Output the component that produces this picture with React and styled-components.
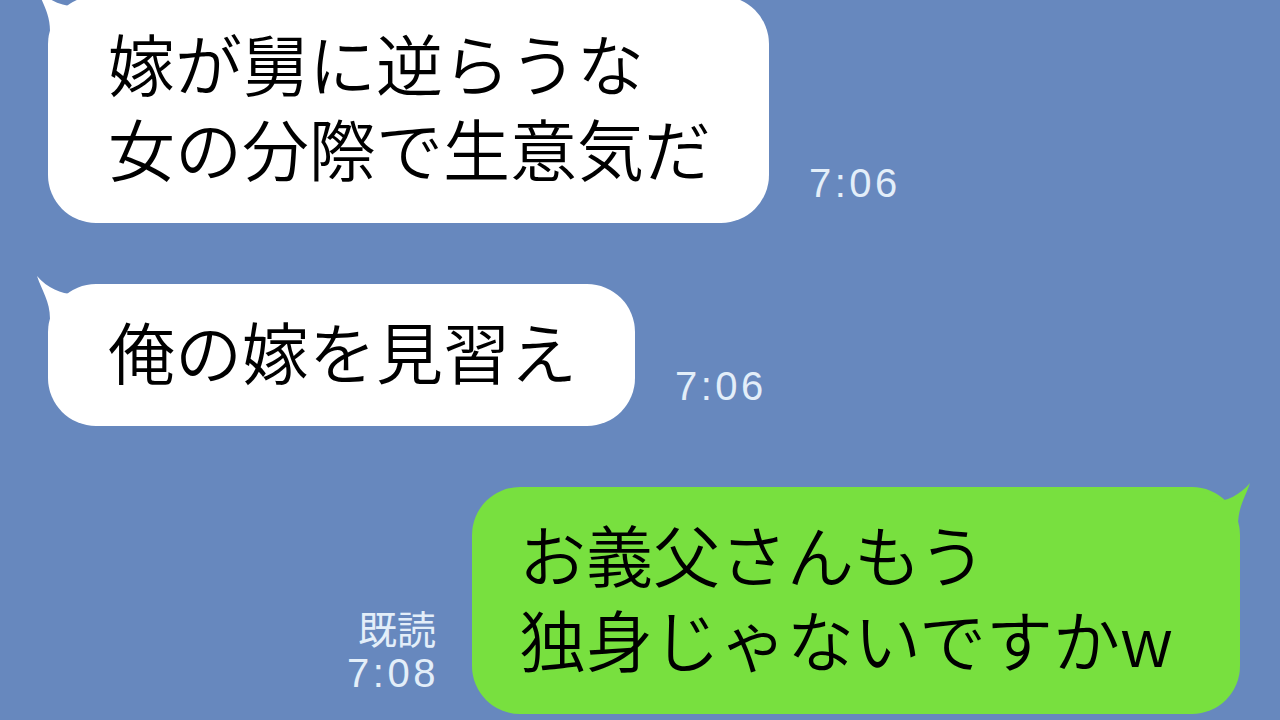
import React from "react";
import styled, { createGlobalStyle } from "styled-components";

const Global = createGlobalStyle`
  html, body { margin: 0; padding: 0; }
  body {
    width: 1280px;
    height: 720px;
    overflow: hidden;
    background: #6788be;
    font-family: "Noto Sans CJK JP", "Noto Sans", sans-serif;
  }
`;

const Screen = styled.div`
  width: 1280px;
  height: 720px;
  background: #6788be;
  overflow: hidden;
`;

const Chat = styled.div`
  display: flex;
  flex-direction: column;
  gap: 61px;
  margin-top: -4px;
  padding: 0 40px 0 48px;
`;

const Row = styled.div`
  display: flex;
  align-items: flex-end;
  justify-content: ${(p) => (p.$mine ? "flex-end" : "flex-start")};
  gap: ${(p) => (p.$mine ? "35px" : "40px")};
`;

const Bubble = styled.div`
  position: relative;
  background: ${(p) => (p.$mine ? "#78e03f" : "#ffffff")};
  border-radius: 48px;
  padding: ${(p) => (p.$mine ? "23px 67px 34px 47px" : "23px 58px 34px 60px")};
  color: #000;
  font-family: "Noto Sans CJK JP", sans-serif;
  font-size: 67px;
  line-height: 85px;
  font-weight: 350;
  white-space: nowrap;
`;

const Line = styled.div``;

const TailSvg = styled.svg`
  position: absolute;
  top: ${(p) => (p.$mine ? "-5px" : "-9px")};
  ${(p) => (p.$mine ? "right: -11px;" : "left: -12px;")}
  width: 50px;
  height: 50px;
  transform: ${(p) => (p.$mine ? "scaleX(-1)" : "none")};
`;

const Meta = styled.div`
  display: flex;
  flex-direction: column;
  align-items: flex-end;
  padding-bottom: ${(p) => (p.$mine ? "21px" : "20px")};
  color: #e3eef9;
  font-family: "Liberation Sans", "Noto Sans CJK JP", sans-serif;
`;

const Read = styled.div`
  font-family: "Noto Sans CJK JP", sans-serif;
  font-size: 39px;
  line-height: 44px;
  margin-bottom: 4px;
  margin-right: 1px;
`;

const Time = styled.div`
  font-size: 40px;
  line-height: 40px;
  letter-spacing: 3.5px;
  margin-right: -2px;
`;

function Tail({ mine, color }) {
  return (
    <TailSvg $mine={mine} viewBox="0 0 50 50">
      {mine ? (
        <path
          d="M1,1 C5,14 13,24 13,44 L40,44 L40,20 C24,20 10,12 1,1 Z"
          fill={color}
        />
      ) : (
        <path
          d="M1,1 C6,16 14,26 14,44 L40,44 L40,19 C28,20 12,14 1,1 Z"
          fill={color}
        />
      )}
    </TailSvg>
  );
}

function Message({ mine, lines, time, read }) {
  const color = mine ? "#78e03f" : "#ffffff";
  const meta = (
    <Meta $mine={mine}>
      {read && <Read>既読</Read>}
      <Time>{time}</Time>
    </Meta>
  );
  return (
    <Row $mine={mine}>
      {mine && meta}
      <Bubble $mine={mine}>
        <Tail mine={mine} color={color} />
        {lines.map((l, i) => (
          <Line key={i}>{l}</Line>
        ))}
      </Bubble>
      {!mine && meta}
    </Row>
  );
}

const messages = [
  { mine: false, lines: ["嫁が舅に逆らうな", "女の分際で生意気だ"], time: "7:06" },
  { mine: false, lines: ["俺の嫁を見習え"], time: "7:06" },
  { mine: true, lines: ["お義父さんもう", "独身じゃないですかw"], time: "7:08", read: true },
];

export default function App() {
  return (
    <Screen>
      <Global />
      <Chat>
        {messages.map((m, i) => (
          <Message key={i} {...m} />
        ))}
      </Chat>
    </Screen>
  );
}
